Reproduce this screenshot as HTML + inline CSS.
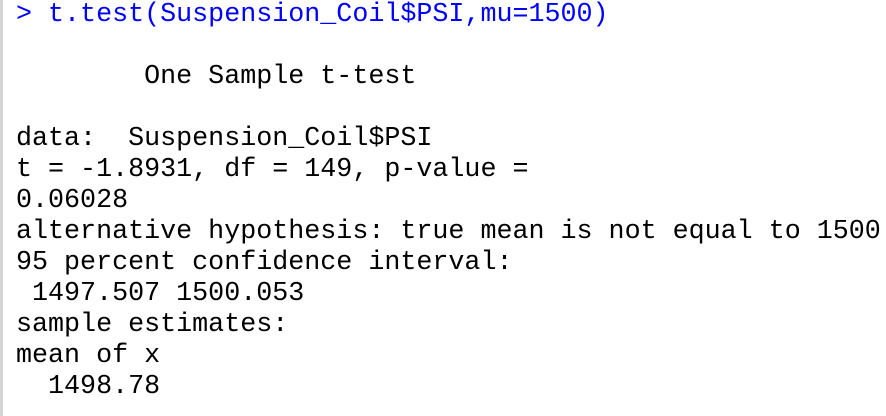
<!DOCTYPE html>
<html><head><style>
html,body{margin:0;padding:0;background:#fff;width:886px;height:416px;overflow:hidden}
.bar{position:absolute;left:0;top:0;width:3px;height:416px;background:#d4d4d4}
pre{position:absolute;left:16px;top:0px;margin:0;font-family:"Liberation Mono",monospace;font-size:26.7px;line-height:31px;color:#000;letter-spacing:0}
.b{color:#0000ff}
</style></head><body>
<div class="bar"></div>
<pre><span class="b">&gt; t.test(Suspension_Coil$PSI,mu=1500)</span>

        One Sample t-test

data:  Suspension_Coil$PSI
t = -1.8931, df = 149, p-value =
0.06028
alternative hypothesis: true mean is not equal to 1500
95 percent confidence interval:
 1497.507 1500.053
sample estimates:
mean of x
  1498.78 </pre>
</body></html>
